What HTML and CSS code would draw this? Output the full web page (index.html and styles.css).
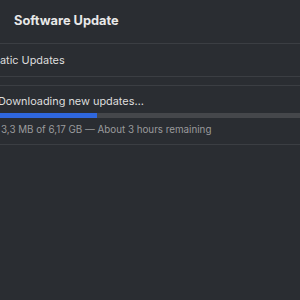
FILE: index.html
```html
<!DOCTYPE html>
<html lang="en">

<head>
    <meta charset="UTF-8">
    <title>Software Update</title>
    <link rel="stylesheet" href="styles.css">
</head>

<body>
    <div class="header">
        <span class="title">Software Update</span>
    </div>

    <div class="section auto-row">
        <span class="label">atic Updates</span>
    </div>

    <div class="section download">
        <div class="label download-label">Downloading new updates…</div>
        <div class="progress">
            <div class="progress-fill" style="width: 97px;"></div>
        </div>
        <div class="sub-label">3,3 MB of 6,17 GB — About 3 hours remaining</div>
    </div>
</body>

</html>
```

FILE: styles.css
```css
body {
    margin: 0;
    background-color: #2a2d32;
    font-family: Inter, "Noto Sans", sans-serif;
    overflow: hidden;
}

.header {
    height: 43px;
    padding-left: 14px;
    display: flex;
    align-items: center;
    border-bottom: 1px solid #3b3e43;
}

.title {
    font-size: 12.8px;
    font-weight: 700;
    color: #e8e8e8;
    margin-top: -2px;
}

.section {
    border-bottom: 1px solid #3b3e43;
}

.auto-row {
    height: 32px;
    display: flex;
    align-items: center;
    margin-bottom: 8px;
}

.label {
    font-size: 10.9px;
    line-height: 14px;
    color: #dedede;
}

.download {
    border-top: 1px solid #3b3e43;
    padding-top: 8px;
    height: 50px;
}

.download-label {
    margin-left: -2px;
}

.progress {
    height: 5px;
    background-color: #45474b;
    margin-top: 5px;
}

.progress-fill {
    height: 100%;
    background-color: #2f67de;
}

.sub-label {
    font-size: 9.8px;
    line-height: 13px;
    color: #9a9b9d;
    margin-top: 5px;
    padding-left: 1px;
}
```
